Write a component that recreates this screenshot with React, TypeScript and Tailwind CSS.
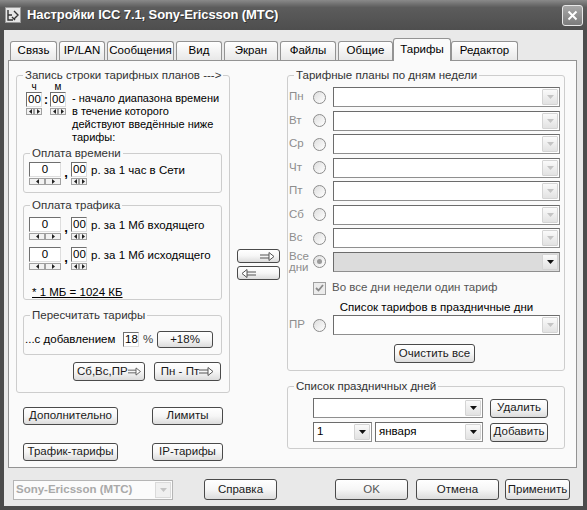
import React from "react";

type Kids = { className?: string; children?: React.ReactNode };

function Btn({ className = "", children }: Kids) {
  return (
    <div
      className={`flex items-center justify-center rounded-[3px] border border-[#4a4a4a] bg-linear-to-b from-white via-[#f6f6f6] to-[#dcdcdc] text-[11.5px] leading-none text-[#1a1a1a] ${className}`}
    >
      {children}
    </div>
  );
}

function Arrow({ left = false }: { left?: boolean }) {
  return (
    <svg width="15" height="9" viewBox="0 0 15 9">
      {left ? (
        <>
          <path d="M6 3h9M6 6h9" stroke="#555" fill="none" />
          <path d="M6 0.5L1 4.5L6 8.5Z" stroke="#555" fill="white" strokeLinejoin="round" />
        </>
      ) : (
        <>
          <path d="M0 3h9M0 6h9" stroke="#555" fill="none" />
          <path d="M9 0.5L14 4.5L9 8.5Z" stroke="#555" fill="white" strokeLinejoin="round" />
        </>
      )}
    </svg>
  );
}

function Edit({ className = "", children }: Kids) {
  return (
    <div
      className={`flex h-[15px] items-center border border-t-[#6f6f6f] border-l-[#6f6f6f] border-r-[#dedede] border-b-[#dedede] bg-white text-[11.5px] leading-none ${className}`}
    >
      {children}
    </div>
  );
}

function Spin({ big = false }: { big?: boolean }) {
  const w = big ? "w-[16px]" : "w-[8px]";
  return (
    <div className="mt-[1px] flex h-[7px]">
      {[0, 1].map((i) => (
        <div
          key={i}
          className={`${w} flex h-[7px] items-center justify-center border border-[#a0a0a0] bg-[#f2f2f2]`}
        >
          <svg width="3" height="5" viewBox="0 0 3 5">
            <path d={i === 0 ? "M3 0L0 2.5L3 5Z" : "M0 0L3 2.5L0 5Z"} fill="#222" />
          </svg>
        </div>
      ))}
    </div>
  );
}

function Money({ text }: { text: string }) {
  return (
    <div className="flex items-start">
      <div className="flex flex-col">
        <Edit className="w-[32px] justify-center">0</Edit>
        <Spin big />
      </div>
      <div className="w-[10px] pt-[4px] text-center text-[13px] font-bold leading-none">,</div>
      <div className="flex flex-col">
        <Edit className="w-[16px] pl-[1px]">00</Edit>
        <Spin />
      </div>
      <div className="ml-[4px] mt-[1px] whitespace-nowrap text-[11.5px] leading-[14px]">{text}</div>
    </div>
  );
}

function Group({ title, className = "", children }: Kids & { title: string }) {
  return (
    <fieldset className={`rounded-[3px] border border-[#cdcdcd] ${className}`}>
      <legend className="ml-[6px] px-[2px] text-[11.5px] leading-[14px] text-[#333]">{title}</legend>
      {children}
    </fieldset>
  );
}

function Combo({
  className = "",
  value = "",
  active = false,
  fill = false,
}: {
  className?: string;
  value?: string;
  active?: boolean;
  fill?: boolean;
}) {
  return (
    <div
      className={`flex h-[20px] border border-[#8f8f8f] border-l-[#6c6c6c] border-t-[#6c6c6c] ${
        fill ? "bg-[#dcdcdc]" : "bg-white"
      } ${className}`}
    >
      <div className="flex flex-1 items-center whitespace-nowrap pl-[3px] text-[11.5px] leading-none">{value}</div>
      <div className="m-[1px] flex w-[16px] items-center justify-center rounded-[1px] border border-[#d4d4d4] bg-linear-to-b from-[#fafafa] to-[#e2e2e2]">
        <svg width="7" height="4" viewBox="0 0 7 4">
          <path d="M0 0h7L3.5 4Z" fill={active ? "#111" : "#c4c4c4"} />
        </svg>
      </div>
    </div>
  );
}

function Radio({ on = false }: { on?: boolean }) {
  return (
    <div className="flex h-[13px] w-[13px] items-center justify-center rounded-full border border-[#8c8c8c] bg-linear-to-br from-[#dedede] to-white">
      {on && <div className="h-[5px] w-[5px] rounded-full bg-[#9a9a9a]" />}
    </div>
  );
}

function DayRow({ label, on = false, twoLine = false }: { label: string; on?: boolean; twoLine?: boolean }) {
  return (
    <div className="flex h-[20px] items-center">
      <div
        className={`w-[25px] pl-[1px] text-[11.5px] text-[#8d8d8d] ${twoLine ? "whitespace-pre leading-[11px]" : "leading-none"}`}
      >
        {label}
      </div>
      <Radio on={on} />
      <Combo className="ml-[7px] w-[227px]" fill={on} active={on} />
    </div>
  );
}

const TABS: [string, string][] = [
  ["Связь", "w-[47px]"],
  ["IP/LAN", "w-[46px]"],
  ["Сообщения", "w-[67px]"],
  ["Вид", "w-[46px]"],
  ["Экран", "w-[54px]"],
  ["Файлы", "w-[56px]"],
  ["Общие", "w-[55px]"],
  ["Тарифы", "w-[58px]"],
  ["Редактор", "w-[67px]"],
];

export default function App() {
  return (
    <div className="flex h-[510px] w-[587px] flex-col bg-[#4c4c4c] font-['Liberation_Sans',Arial,sans-serif] text-black">
      {/* title bar */}
      <div className="flex h-[30px] items-center bg-linear-to-b from-[#8a8a8a] via-[#5c5c5c] via-25% to-[#4e4e4e] pl-[5px] pr-[4px]">
        <svg width="16" height="16" viewBox="0 0 16 16">
          <rect x="0.5" y="0.5" width="15" height="15" fill="#e6e6e6" stroke="#9a9a9a" />
          <path d="M3 3v10h5M3 8h4M9 4l4 4-4 4M7 10l3 3" stroke="#333" strokeWidth="1.4" fill="none" />
        </svg>
        <div className="ml-[6px] text-[13px] font-bold tracking-[-0.1px] text-white [text-shadow:1px_1px_0_#333]">
          Настройки ICC 7.1, Sony-Ericsson (МТС)
        </div>
        <div className="ml-auto flex h-[21px] w-[21px] items-center justify-center rounded-[3px] border border-[#e8e8e8] bg-linear-to-b from-[#a8a8a8] to-[#7c7c7c]">
          <svg width="11" height="11" viewBox="0 0 11 11">
            <path d="M1.5 1.5l8 8M9.5 1.5l-8 8" stroke="white" strokeWidth="2" />
          </svg>
        </div>
      </div>

      {/* body */}
      <div className="mx-[4px] mb-[4px] flex flex-1 flex-col bg-[#e9e9e9] pl-[4px] pr-[6px]">
        {/* tabs */}
        <div className="mt-[8px] flex h-[22px] items-end gap-[2px] pl-[2px]">
          {TABS.map(([t, w]) =>
            t === "Тарифы" ? (
              <div
                key={t}
                className={`relative z-10 -mx-[2px] mb-[-1px] flex h-[23px] items-center justify-center rounded-t-[3px] border border-b-0 border-[#939393] bg-[#fafafa] text-[11.5px] ${w}`}
              >
                {t}
              </div>
            ) : (
              <div
                key={t}
                className={`flex h-[19px] items-center justify-center rounded-t-[3px] border border-b-0 border-[#939393] bg-linear-to-b from-white to-[#e8e8e8] text-[11.5px] ${w}`}
              >
                {t}
              </div>
            )
          )}
        </div>

        {/* panel */}
        <div className="flex h-[408px] w-[569px] border border-[#939393] bg-[#fafafa] pl-[7px]">
          {/* left column */}
          <div className="flex w-[214px] flex-col pt-[7px]">
            <Group title="Запись строки тарифных планов --->" className="h-[325px]">
              <div className="flex h-[64px]">
                <div className="ml-[9px] flex flex-col">
                  <div className="flex h-[10px] text-[10px] leading-[10px]">
                    <div className="w-[16px] text-center">ч</div>
                    <div className="w-[8px]" />
                    <div className="w-[16px] text-center">м</div>
                  </div>
                  <div className="flex items-center">
                    <Edit className="w-[16px] pl-[1px]">00</Edit>
                    <div className="w-[8px] text-center text-[12px] font-bold leading-none">:</div>
                    <Edit className="w-[16px] pl-[1px]">00</Edit>
                  </div>
                  <div className="flex">
                    <Spin />
                    <div className="w-[8px]" />
                    <Spin />
                  </div>
                </div>
                <div className="ml-[6px] mt-[10px] whitespace-nowrap text-[11px] leading-[13px]">
                  <div>- начало диапазона времени</div>
                  <div>в течение которого</div>
                  <div>действуют введённые ниже</div>
                  <div>тарифы:</div>
                </div>
              </div>

              <Group title="Оплата времени" className="ml-[6px] h-[47px] w-[199px]">
                <div className="ml-[5px] mt-[2px]">
                  <Money text="р. за 1 час в Сети" />
                </div>
              </Group>

              <Group title="Оплата трафика" className="ml-[6px] mt-[5px] h-[102px] w-[199px]">
                <div className="ml-[5px] mt-[5px]">
                  <Money text="р. за 1 Мб входящего" />
                </div>
                <div className="ml-[5px] mt-[7px]">
                  <Money text="р. за 1 Мб исходящего" />
                </div>
                <div className="ml-[8px] mt-[15px] text-[11.5px] leading-[14px] underline">* 1 МБ = 1024 КБ</div>
              </Group>

              <Group title="Пересчитать тарифы" className="ml-[6px] mt-[8px] h-[47px] w-[199px]">
                <div className="ml-[1px] mt-[9px] flex h-[17px] items-center">
                  <div className="w-[98px] whitespace-nowrap text-[11.5px]">...с добавлением</div>
                  <Edit className="w-[16px] pl-[1px]">18</Edit>
                  <div className="w-[18px] pl-[4px] text-[11.5px] text-[#444]">%</div>
                  <Btn className="h-[17px] w-[56px]">+18%</Btn>
                </div>
              </Group>

              <div className="ml-[56px] mt-[7px] flex gap-[9px]">
                <Btn className="h-[19px] w-[72px] justify-between px-[3px]">
                  <span>Сб,Вс,ПР</span>
                  <Arrow />
                </Btn>
                <Btn className="h-[19px] w-[67px] justify-between px-[3px]">
                  <span>Пн - Пт</span>
                  <Arrow />
                </Btn>
              </div>
            </Group>

            <div className="ml-[7px] mt-[14px] flex gap-[34px]">
              <Btn className="h-[18px] w-[95px]">Дополнительно</Btn>
              <Btn className="h-[18px] w-[71px]">Лимиты</Btn>
            </div>
            <div className="ml-[7px] mt-[18px] flex gap-[34px]">
              <Btn className="h-[18px] w-[95px]">Трафик-тарифы</Btn>
              <Btn className="h-[18px] w-[71px]">IP-тарифы</Btn>
            </div>
          </div>

          {/* middle column */}
          <div className="ml-[7px] flex w-[43px] flex-col gap-[3px] pt-[188px]">
            <Btn className="h-[14px] justify-end pr-[4px]">
              <Arrow />
            </Btn>
            <Btn className="h-[14px] justify-start pl-[3px]">
              <Arrow left />
            </Btn>
          </div>

          {/* right column */}
          <div className="ml-[7px] flex w-[278px] flex-col pt-[7px]">
            <Group title="Тарифные планы по дням недели" className="h-[303px]">
              <div className="mt-[5px] flex flex-col gap-[3.5px]">
                <DayRow label="Пн" />
                <DayRow label="Вт" />
                <DayRow label="Ср" />
                <DayRow label="Чт" />
                <DayRow label="Пт" />
                <DayRow label="Сб" />
                <DayRow label="Вс" />
                <DayRow label={"Все\nдни"} on twoLine />
              </div>
              <div className="ml-[25px] mt-[9.5px] flex h-[14px] items-center">
                <div className="flex h-[13px] w-[13px] items-center justify-center border border-[#a0a0a0] bg-[#ececec]">
                  <svg width="9" height="8" viewBox="0 0 9 8">
                    <path d="M1 4l2.5 2.5L8 1" stroke="#8a8a8a" strokeWidth="1.8" fill="none" />
                  </svg>
                </div>
                <div className="ml-[6px] text-[11.5px] text-[#555]">Во все дни недели один тариф</div>
              </div>
              <div className="ml-[25px] mt-[5px] w-[247px] text-center text-[11.5px] leading-[14px]">
                Список тарифов в праздничные дни
              </div>
              <div className="mt-[1px]">
                <DayRow label="ПР" />
              </div>
              <Btn className="ml-[106px] mt-[9px] h-[19px] w-[81px]">Очистить все</Btn>
            </Group>

            <Group title="Список праздничных дней" className="mt-[8px] h-[70px]">
              <div className="ml-[25px] mt-[5px] flex items-center">
                <Combo className="w-[170px]" active />
                <Btn className="ml-[7px] h-[19px] w-[58px]">Удалить</Btn>
              </div>
              <div className="ml-[25px] mt-[4px] flex items-center">
                <Combo className="w-[59px]" value="1" active />
                <Combo className="ml-[3px] w-[108px]" value="января" active />
                <Btn className="ml-[7px] h-[19px] w-[58px]">Добавить</Btn>
              </div>
            </Group>
          </div>
        </div>

        {/* bottom buttons */}
        <div className="mt-[11px] flex h-[21px] items-center">
          <div className="ml-[5px] flex h-[20px] w-[160px] border border-[#b5b5b5] bg-[#fbfbfb]">
            <div className="flex flex-1 items-center pl-[2px] text-[11.5px] font-bold text-[#a9a9a9]">
              Sony-Ericsson (МТС)
            </div>
            <div className="m-[1px] flex w-[16px] items-center justify-center border border-[#dadada] bg-[#f0f0f0]">
              <svg width="7" height="4" viewBox="0 0 7 4">
                <path d="M0 0h7L3.5 4Z" fill="#c4c4c4" />
              </svg>
            </div>
          </div>
          <Btn className="ml-[31px] h-[21px] w-[73px]">Справка</Btn>
          <Btn className="ml-[58px] h-[21px] w-[73px] text-[#555]">OK</Btn>
          <Btn className="ml-[8px] h-[21px] w-[83px]">Отмена</Btn>
          <Btn className="ml-[6px] h-[21px] w-[65px]">Применить</Btn>
        </div>
      </div>
    </div>
  );
}
